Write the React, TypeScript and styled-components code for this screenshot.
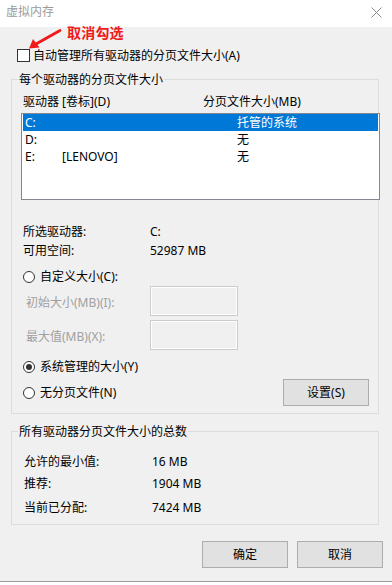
import React from "react";
import styled, { createGlobalStyle } from "styled-components";

const Global = createGlobalStyle`
  html, body { margin: 0; padding: 0; background: #ffffff; }
  body {
    font-family: "Noto Sans", "Noto Sans CJK SC", sans-serif;
    font-size: 12px;
    color: #000;
  }
  * { box-sizing: border-box; }
`;

const Window = styled.div`
  width: 392px;
  height: 585px;
  background: #ffffff;
  display: flex;
  flex-direction: column;
`;

const TitleBar = styled.div`
  height: 27px;
  flex: none;
  display: flex;
  align-items: center;
  justify-content: space-between;
  padding: 0 10px 3px 6px;
  background: #ffffff;
`;

const Title = styled.span`
  color: #9a9a9a;
  font-size: 12px;
  line-height: 16px;
`;

const Body = styled.div`
  position: relative;
  background: #f0f0f0;
  border-bottom: 1px solid #9c9c9c;
  padding: 0 0 13px;
  display: flex;
  flex-direction: column;
`;

const Annotation = styled.div`
  position: absolute;
  left: 67px;
  top: -2px;
  color: #f01a1a;
  font-weight: 700;
  font-size: 14px;
  line-height: 14px;
  font-family: "Noto Sans CJK SC", sans-serif;
  letter-spacing: 0.2px;
`;

const ArrowSvg = styled.svg`
  position: absolute;
  left: 0;
  top: 0;
  overflow: visible;
`;

const CheckRow = styled.label`
  margin: 22px 0 0 17px;
  height: 13px;
  display: flex;
  align-items: center;
  line-height: 13px;
  white-space: nowrap;
`;

const CheckBox = styled.span`
  width: 13px;
  height: 13px;
  border: 1px solid #333333;
  background: #ffffff;
  flex: none;
  margin-right: 3px;
`;

const Group = styled.div<{ $top: number }>`
  position: relative;
  margin: ${(p) => p.$top}px 0 0 11px;
  width: 368px;
  border: 1px solid #dcdcdc;
`;

const Legend = styled.span`
  position: absolute;
  left: 6px;
  top: -10px;
  padding: 0 1px;
  background: #f0f0f0;
  line-height: 19px;
  white-space: nowrap;
`;

const Group1Inner = styled.div`
  padding: 12px 7px 7px 11px;
  display: flex;
  flex-direction: column;
`;

const HeaderRow = styled.div`
  display: grid;
  grid-template-columns: 180px 1fr;
  line-height: 19px;
  height: 19px;
  white-space: nowrap;
`;

const ListBox = styled.div`
  margin: 2px 0 0 -2px;
  width: 359px;
  height: 87px;
  border: 1px solid #828790;
  background: #ffffff;
  padding: 0 1px;
`;

const DriveRow = styled.div<{ $selected?: boolean }>`
  display: grid;
  grid-template-columns: 37px 175px 1fr;
  padding-left: 2px;
  height: 17px;
  line-height: 17px;
  background: ${(p) => (p.$selected ? "#0078d7" : "transparent")};
  color: ${(p) => (p.$selected ? "#ffffff" : "#000000")};
  white-space: nowrap;
`;

const InfoBlock = styled.div<{ $top: number; $labelW: number }>`
  margin-top: ${(p) => p.$top}px;
  display: grid;
  grid-template-columns: ${(p) => p.$labelW}px 1fr;
  line-height: 19px;
  white-space: nowrap;
`;

const RadioRow = styled.div<{ $top: number }>`
  margin-top: ${(p) => p.$top}px;
  height: 18px;
  display: flex;
  align-items: center;
  line-height: 18px;
  white-space: nowrap;
`;

const Radio = styled.span<{ $checked?: boolean }>`
  width: 12px;
  height: 12px;
  border-radius: 50%;
  border: 1px solid #333333;
  background: #ffffff;
  flex: none;
  margin-right: 5px;
  display: flex;
  align-items: center;
  justify-content: center;
  &::after {
    content: "";
    width: 6px;
    height: 6px;
    border-radius: 50%;
    background: ${(p) => (p.$checked ? "#333333" : "transparent")};
  }
`;

const InputRow = styled.div<{ $top: number }>`
  margin-top: ${(p) => p.$top}px;
  display: flex;
  align-items: center;
  height: 30px;
`;

const DisabledLabel = styled.span`
  width: 127px;
  padding: 3px 0 0 3px;
  color: #a0a0a0;
  white-space: nowrap;
  line-height: 19px;
`;

const DisabledInput = styled.div`
  width: 88px;
  height: 30px;
  border: 1px solid #cccccc;
  box-shadow: inset 0 0 0 1px #ffffff;
  background: #f0f0f0;
`;

const LastRow = styled.div`
  margin-top: 3px;
  display: flex;
  align-items: center;
  justify-content: space-between;
  padding-right: 2px;
  height: 27px;
`;

const RadioLabel = styled.div`
  display: flex;
  align-items: center;
  line-height: 18px;
  white-space: nowrap;
`;

const Button = styled.button<{ $w: number }>`
  width: ${(p) => p.$w}px;
  height: 27px;
  background: #e1e1e1;
  border: 1px solid #adadad;
  border-radius: 0;
  font-family: inherit;
  font-size: 12px;
  color: #000;
  padding: 0;
  line-height: 25px;
`;

const Group2Inner = styled.div`
  padding: 20px 8px 7px 12px;
  display: flex;
  flex-direction: column;
`;

const ButtonsRow = styled.div`
  margin-top: 16px;
  display: flex;
  justify-content: flex-end;
  gap: 9px;
  padding-right: 9px;
`;

export default function App() {
  return (
    <>
      <Global />
      <Window>
        <TitleBar>
          <Title>虚拟内存</Title>
          <svg width="11" height="11" viewBox="0 0 11 11">
            <path d="M0.5 0.5 L10.5 10.5 M10.5 0.5 L0.5 10.5" stroke="#8a8a8a" strokeWidth="1" fill="none" />
          </svg>
        </TitleBar>
        <Body>
          <Annotation>取消勾选</Annotation>
          <ArrowSvg width="70" height="30" viewBox="0 0 70 30">
            <path d="M60 3.5 L36 17" stroke="#f01a1a" strokeWidth="2.8" strokeLinecap="round" fill="none" />
            <path d="M29 21.5 L33 12 L39.5 20.5 Z" fill="#f01a1a" />
          </ArrowSvg>
          <CheckRow>
            <CheckBox />
            <span>自动管理所有驱动器的分页文件大小(A)</span>
          </CheckRow>

          <Group $top={17}>
            <Legend>每个驱动器的分页文件大小</Legend>
            <Group1Inner>
              <HeaderRow>
                <span>驱动器 [卷标](D)</span>
                <span>分页文件大小(MB)</span>
              </HeaderRow>
              <ListBox>
                <DriveRow $selected>
                  <span>C:</span>
                  <span></span>
                  <span>托管的系统</span>
                </DriveRow>
                <DriveRow>
                  <span>D:</span>
                  <span></span>
                  <span>无</span>
                </DriveRow>
                <DriveRow>
                  <span>E:</span>
                  <span>[LENOVO]</span>
                  <span>无</span>
                </DriveRow>
              </ListBox>
              <InfoBlock $top={22} $labelW={127}>
                <span>所选驱动器:</span>
                <span>C:</span>
                <span>可用空间:</span>
                <span>52987 MB</span>
              </InfoBlock>
              <RadioRow $top={8}>
                <Radio />
                <span>自定义大小(C):</span>
              </RadioRow>
              <InputRow $top={0}>
                <DisabledLabel>初始大小(MB)(I):</DisabledLabel>
                <DisabledInput />
              </InputRow>
              <InputRow $top={4}>
                <DisabledLabel>最大值(MB)(X):</DisabledLabel>
                <DisabledInput />
              </InputRow>
              <RadioRow $top={8}>
                <Radio $checked />
                <span>系统管理的大小(Y)</span>
              </RadioRow>
              <LastRow>
                <RadioLabel>
                  <Radio />
                  <span>无分页文件(N)</span>
                </RadioLabel>
                <Button $w={86}>设置(S)</Button>
              </LastRow>
            </Group1Inner>
          </Group>

          <Group $top={17}>
            <Legend>所有驱动器分页文件大小的总数</Legend>
            <Group2Inner>
              <InfoBlock $top={0} $labelW={128}>
                <span>允许的最小值:</span>
                <span>16 MB</span>
              </InfoBlock>
              <InfoBlock $top={3} $labelW={128}>
                <span>推荐:</span>
                <span>1904 MB</span>
              </InfoBlock>
              <InfoBlock $top={5} $labelW={128}>
                <span>当前已分配:</span>
                <span>7424 MB</span>
              </InfoBlock>
            </Group2Inner>
          </Group>

          <ButtonsRow>
            <Button $w={86}>确定</Button>
            <Button $w={86}>取消</Button>
          </ButtonsRow>
        </Body>
      </Window>
    </>
  );
}
